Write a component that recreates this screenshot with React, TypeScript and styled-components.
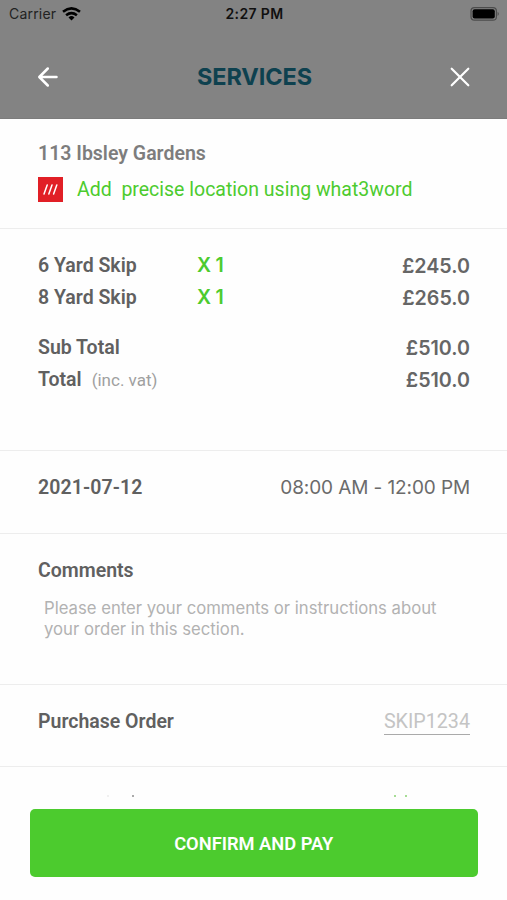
import React from "react";
import styled, { createGlobalStyle } from "styled-components";

const Global = createGlobalStyle`
  * { box-sizing: border-box; }
  body { margin: 0; background: #fff; font-family: Roboto, sans-serif; }
  button { border: 0; padding: 0; background: none; font: inherit; color: inherit; display: flex; }
`;

const Screen = styled.main`
  width: 507px;
  height: 900px;
  overflow: hidden;
  background: #fefefe;
  display: flex;
  flex-direction: column;
`;

const Header = styled.header`
  height: 119px;
  flex: none;
  background: #838383;
  border-bottom: 1px solid #7c7c7c;
`;

const StatusBar = styled.div`
  height: 27px;
  padding: 0 7px 0 9px;
  display: grid;
  grid-template-columns: 1fr auto 1fr;
  align-items: center;
  font-family: Inter, sans-serif;
  color: #101010;
`;

const Carrier = styled.div`
  display: flex;
  align-items: center;
  gap: 6px;
  font-size: 14px;
  letter-spacing: 0.2px;
  color: #222;
`;

const Clock = styled.time`
  font-size: 14px;
  font-weight: 600;
  letter-spacing: 0.35px;
`;

const Battery = styled.svg`
  justify-self: end;
`;

const NavBar = styled.nav`
  height: 92px;
  padding: 7px 37px 0;
  display: flex;
  justify-content: space-between;
  align-items: center;
  color: #fff;
`;

const Title = styled.h1`
  margin: 0;
  font: 700 23.5px/30px Inter, sans-serif;
  letter-spacing: -0.1px;
  color: #0e414f;
`;

const Section = styled.section<{ $height: number; $top: number }>`
  height: ${(p) => p.$height}px;
  padding: ${(p) => p.$top}px 37px 0 38px;
  flex: none;
  border-bottom: 1px solid #ededed;
`;

const Row = styled.div<{ $gapTop?: number }>`
  display: flex;
  align-items: center;
  justify-content: space-between;
  height: 32px;
  margin-top: ${(p) => p.$gapTop ?? 0}px;
`;

const ItemRow = styled.div`
  display: grid;
  grid-template-columns: 159px 1fr auto;
  align-items: center;
  height: 32px;
`;

const Label = styled.span<{ $track?: number; $muted?: boolean }>`
  font-size: 19.5px;
  font-weight: 600;
  line-height: 32px;
  white-space: nowrap;
  letter-spacing: ${(p) => p.$track ?? 0}px;
  color: ${(p) => (p.$muted ? "#7d7d7d" : "#606060")};
`;

const Quantity = styled.span`
  height: 32px;
  font: 600 19.5px/31px Inter, sans-serif;
  letter-spacing: -0.2px;
  color: #4ccb2e;
`;

const Price = styled.span`
  font: 600 19.7px/32px Inter, sans-serif;
  color: #666;
`;

const TaxNote = styled.small`
  margin-left: 10px;
  font-size: 17px;
  font-weight: 400;
  letter-spacing: 0;
  color: #a0a0a0;
`;

const LocationLink = styled.a`
  display: flex;
  align-items: center;
  gap: 14px;
  height: 26px;
  margin-top: 6px;
  font-size: 19.5px;
  letter-spacing: 0;
  white-space: pre;
  color: #4ccb2e;
`;

const TimeRange = styled.span`
  font: 400 19px/32px Inter, sans-serif;
  letter-spacing: -0.1px;
  color: #6b6b6b;
`;

const CommentText = styled.p`
  margin: 11px 0 0 6px;
  font: 400 16.7px/21px Inter, sans-serif;
  white-space: pre;
  color: #b2b2b2;
`;

const OrderNumber = styled.span`
  height: 28px;
  margin-bottom: 3px;
  font-size: 19.7px;
  line-height: 29px;
  color: #c4c4c4;
  border-bottom: 1px solid #aaa;
`;

const HiddenRow = styled.div`
  height: 42px;
  flex: none;
  padding: 28px 0 0 107px;
  display: flex;
`;

const Tip = styled.i<{ $gap: number; $color: string }>`
  width: 2px;
  height: 2px;
  margin-right: ${(p) => p.$gap}px;
  background: ${(p) => p.$color};
`;

const PayButton = styled.button`
  && {
    width: 447.5px;
    height: 68px;
    margin-left: 30px;
    align-items: center;
    justify-content: center;
    flex: none;
    border-radius: 5px;
    background: #4ccb2e;
    color: #fff;
    font-size: 18.3px;
    font-weight: 600;
  }
`;

const items = [
  { name: "6 Yard Skip", price: "£245.0" },
  { name: "8 Yard Skip", price: "£265.0" },
];

export default function App() {
  return (
    <Screen>
      <Global />
      <Header>
        <StatusBar>
          <Carrier>
            <span>Carrier</span>
            <svg width="19" height="14" viewBox="0 0 19 14" fill="none" stroke="#000" strokeWidth="2.6">
              <path d="M1 4.8Q9.5 -1.9 18 4.8" />
              <path d="M4.1 8.2Q9.5 3.9 14.9 8.2" />
              <path d="M6.5 10.4Q9.5 7.7 12.5 10.4L9.5 13.5Z" fill="#000" stroke="none" />
            </svg>
          </Carrier>
          <Clock>2:27 PM</Clock>
          <Battery width="30" height="14" viewBox="0 0 30 14">
            <rect x="1" y=".6" width="25.4" height="12.6" rx="3.5" fill="none" stroke="#4c4c4c" strokeWidth="1.2" />
            <rect x="2.6" y="2.2" width="22.2" height="9.4" rx="2" fill="#000" />
            <path d="M27.6 4.8Q30 6.9 27.6 9Z" fill="#4c4c4c" />
          </Battery>
        </StatusBar>
        <NavBar>
          <button aria-label="Back">
            <svg width="22" height="22" viewBox="0 0 22 22" fill="none" stroke="#fff" strokeWidth="2.5" strokeLinecap="round" strokeLinejoin="round">
              <path d="M19.5 11H2.5M10.8 2.5L2.3 11L10.8 19.5" />
            </svg>
          </button>
          <Title>SERVICES</Title>
          <button aria-label="Close">
            <svg width="20" height="20" viewBox="0 0 20 20" fill="none" stroke="#fff" strokeWidth="2.2" strokeLinecap="round">
              <path d="M1.7 1.7L18.3 18.3M18.3 1.7L1.7 18.3" />
            </svg>
          </button>
        </NavBar>
      </Header>

      <Section $height={110} $top={19}>
        <Label as="div" $muted>113 Ibsley Gardens</Label>
        <LocationLink>
          <svg width="25" height="25" viewBox="0 0 25 25">
            <rect width="25" height="25" fill="#e11f26" />
            <path d="M6 17L9.2 8M10.8 17L14 8M15.6 17L18.8 8" stroke="#fff" strokeWidth="1.5" strokeLinecap="round" />
          </svg>
          <span>{"Add  precise location using what3word"}</span>
        </LocationLink>
      </Section>

      <Section $height={222} $top={21}>
        {items.map((item) => (
          <ItemRow key={item.name}>
            <Label>{item.name}</Label>
            <Quantity>X 1</Quantity>
            <Price>{item.price}</Price>
          </ItemRow>
        ))}
        <Row $gapTop={18}>
          <Label>Sub Total</Label>
          <Price>£510.0</Price>
        </Row>
        <Row>
          <Label>
            Total<TaxNote>(inc. vat)</TaxNote>
          </Label>
          <Price>£510.0</Price>
        </Row>
      </Section>

      <Section $height={83} $top={21}>
        <Row>
          <Label $track={0.1}>2021-07-12</Label>
          <TimeRange>08:00 AM - 12:00 PM</TimeRange>
        </Row>
      </Section>

      <Section $height={151} $top={21}>
        <Label as="div">Comments</Label>
        <CommentText>{"Please enter your comments or instructions about\nyour order in this section."}</CommentText>
      </Section>

      <Section $height={82} $top={21}>
        <Row>
          <Label>Purchase Order</Label>
          <OrderNumber>SKIP1234</OrderNumber>
        </Row>
      </Section>

      <HiddenRow>
        <Tip $gap={23} $color="#f0f0f0" />
        <Tip $gap={260} $color="#aaa" />
        <Tip $gap={9} $color="#a6dd94" />
        <Tip $gap={0} $color="#a6dd94" />
      </HiddenRow>
      <PayButton>CONFIRM AND PAY</PayButton>
    </Screen>
  );
}
